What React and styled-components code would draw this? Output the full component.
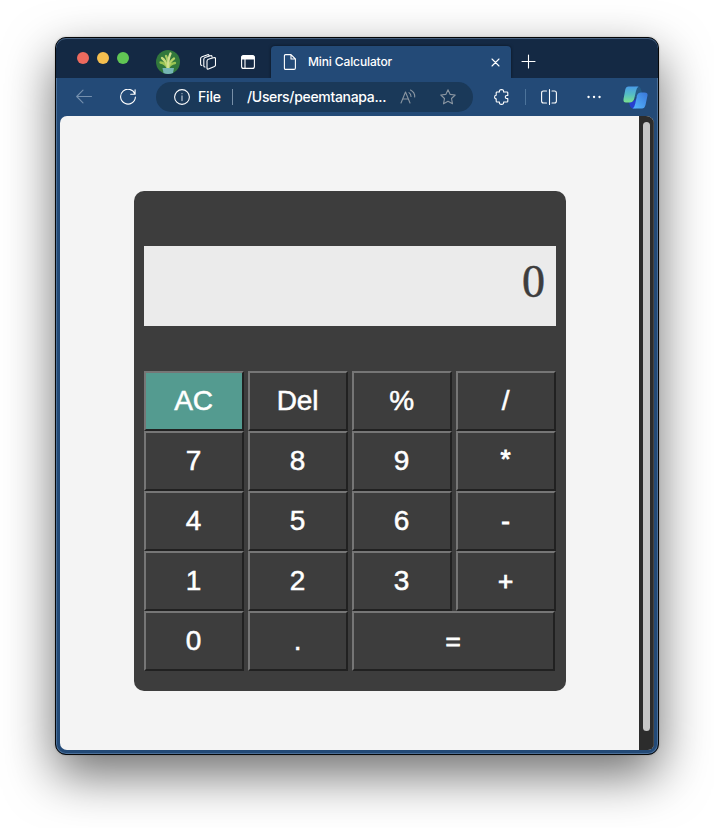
import React from "react";
import styled, { createGlobalStyle } from "styled-components";

const GlobalStyle = createGlobalStyle`
  * { box-sizing: border-box; }
  body { margin: 0; background: #fff; overflow: hidden; }
`;

const Desktop = styled.main`
  height: 828px;
  width: 714px;
  padding: 37px 55px 73px;
  overflow: hidden;
`;

const BrowserWindow = styled.section`
  width: 604px;
  height: 718px;
  border: 1px solid #050607;
  border-radius: 11px;
  background: #234a77;
  overflow: hidden;
  display: flex;
  flex-direction: column;
  box-shadow: inset 0 0 0 1px #4b6f98, 0 20px 50px rgba(0, 0, 0, 0.57), 0 0 2px rgba(0, 0, 0, 0.25);
  font-family: Inter, sans-serif;
  color: #fff;
`;

const TabStrip = styled.header`
  height: 40px;
  flex: none;
  display: flex;
  align-items: flex-end;
  background: #142944;
  box-shadow: inset 0 1px #46607f;
  border-radius: 10px 10px 0 0;
`;

const StripTools = styled.div`
  width: 215px;
  height: 40px;
  padding: 7px 0 0 21px;
  display: flex;
`;

const Lights = styled.div`
  display: flex;
  gap: 8px;
  padding-top: 7px;
  width: 79px;
`;

const Light = styled.span`
  width: 12px;
  height: 12px;
  border-radius: 50%;
  background: ${(p) => p.$color};
`;

const Glyph = styled.svg`
  display: block;
  flex: none;
  width: ${(p) => p.$w || 16}px;
  height: ${(p) => p.$h || 16}px;
  margin: ${(p) => p.$margin || "0"};
  fill: none;
  stroke: ${(p) => p.$color || "#fff"};
  stroke-width: ${(p) => p.$stroke || 1.1};
  stroke-linecap: round;
  stroke-linejoin: round;
`;

const Tab = styled.div`
  width: 240px;
  height: 32px;
  display: flex;
  align-items: center;
  background: #234a77;
  border-radius: 4px 4px 0 0;
  box-shadow: 0 0 3px rgba(0, 0, 0, 0.55);
  padding-left: 12px;
`;

const TabTitle = styled.span`
  width: 194px;
  padding-left: 11px;
  font: 500 12px/16px Inter, sans-serif;
  letter-spacing: -0.12px;
  white-space: nowrap;
`;

const Toolbar = styled.nav`
  height: 38px;
  flex: none;
  display: flex;
  align-items: center;
  padding-left: 20px;
  background: #234a77;
  margin: 0 1px;
`;

const AddressBar = styled.div`
  width: 317px;
  height: 30px;
  flex: none;
  margin: 0 21px 0 20px;
  border-radius: 15px;
  background: #1a3959;
  display: flex;
  align-items: center;
  padding-left: 18px;
  font: 500 14px/18px Inter, sans-serif;
  white-space: nowrap;
`;

const Scheme = styled.span`
  width: 34px;
  margin-left: 8px;
  letter-spacing: -0.2px;
`;

const Url = styled.span`
  width: 154px;
  margin-left: 14px;
  letter-spacing: -0.32px;
`;

const Divider = styled.i`
  width: 1px;
  height: 16px;
  flex: none;
  background: ${(p) => p.$color || "#7890a8"};
  margin: ${(p) => p.$margin || "0"};
`;

const Viewport = styled.div`
  height: 634px;
  margin: 0 4px;
  display: flex;
  border-radius: 7px 8px 6px 7px;
  overflow: hidden;
  background: #f4f4f4;
`;

const Page = styled.div`
  width: 579px;
  padding: 75px 73px 0 74px;
`;

const Scrollbar = styled.div`
  width: 15px;
  background: #2c2c2c;
  border-right: 1px solid #454545;
  padding: 6px 3px 0 4px;
`;

const Thumb = styled.div`
  width: 7px;
  height: 609px;
  border-radius: 4px;
  background: #c6c6c6;
`;

const Calculator = styled.section`
  width: 432px;
  height: 500px;
  padding: 55px 10px 20px;
  border-radius: 10px;
  background: #3d3d3d;
`;

const Display = styled.output`
  display: block;
  height: 80px;
  margin-bottom: 45px;
  padding: 10px 11px 0;
  background: #ebebeb;
  color: #3d3d3d;
  font: 46px/52px "Liberation Serif", serif;
  -webkit-text-stroke: 0.5px #3d3d3d;
  text-align: right;
`;

const Keypad = styled.div`
  display: grid;
  grid-template-columns: repeat(4, 100px);
  grid-auto-rows: 60px;
  column-gap: 4px;
`;

const Key = styled.button`
  grid-column: span ${(p) => (p.$wide ? 2 : 1)};
  width: ${(p) => (p.$wide ? 203 : 100)}px;
  padding: 0 1px 0 0;
  border: 2px solid;
  border-color: #767676 #212121 #212121 #767676;
  background: ${(p) => (p.$accent ? "#549b90" : "#3d3d3d")};
  color: #fff;
  font: 28px/32px "Liberation Sans", sans-serif;
  letter-spacing: -0.2px;
  -webkit-text-stroke: 0.5px #fff;
`;

const OperatorKey = styled(Key)`
  padding-bottom: ${(p) => p.$raise || 0}px;
  font-size: 26px;
  -webkit-text-stroke: 0.9px #fff;
`;

const keys = ["AC", "Del", "%", "/", "7", "8", "9", "*", "4", "5", "6", "-", "1", "2", "3", "+", "0", ".", "="];
const operatorRaise = { "*": 5, "-": 1, "+": 1, "=": 1 };

function Avatar() {
  return (
    <Glyph $w={24} $h={24} $margin="5px 0 0" viewBox="0 0 24 24">
      <circle cx="12" cy="12" r="12" fill="#32783c" stroke="none" />
      <g strokeWidth="2.3">
        <path d="M12 18Q9 13 4.5 12.5" stroke="#9bc553" />
        <path d="M12 18Q14 14 19 13" stroke="#9bc553" />
        <path d="M12 18Q10 11 6 8" stroke="#c6da7b" />
        <path d="M12 18Q14 11 18 8.5" stroke="#b6d367" />
        <path d="M12 18Q12 9 10 6" stroke="#a6cc60" />
        <path d="M12 18Q12 9 14.5 3.5" stroke="#d0df91" />
      </g>
      <path d="M6.5 18H18L17 23Q12 25 7.5 23Z" fill="#75b5b5" stroke="none" />
    </Glyph>
  );
}

function Copilot() {
  return (
    <Glyph $w={25} $h={23} $margin="0 0 0 21px" viewBox="0 0 25 23">
      <defs>
        <linearGradient id="mint" x1="0" y1="0" x2="0" y2="1">
          <stop stopColor="#4a9ce8" />
          <stop offset=".5" stopColor="#55bdc4" />
          <stop offset="1" stopColor="#7be18d" />
        </linearGradient>
        <linearGradient id="sky" x1="0" y1="1" x2="1" y2="0">
          <stop stopColor="#56b8ff" />
          <stop offset="1" stopColor="#3976d8" />
        </linearGradient>
      </defs>
      <g stroke="none">
        <path d="M12 .5H15.5Q17.5 .5 19 6.5L15 11H11Z" fill="#245b86" />
        <path d="M6 16H9L15 12L13 22.5H10Q7 22.5 6 16Z" fill="#263fcf" />
        <path d="M5.5 .5H15.5Q13.7 1.5 13 5L11.3 12.5Q10.3 16.5 6.5 16.5H3Q0 16.5 .5 13L2.3 3.5Q3 .5 5.5 .5Z" fill="url(#mint)" />
        <path d="M18 6.5H21.5Q25 6.5 24.5 9.5L22.5 19Q21.5 22.5 19 22.5H9.5Q11.5 21.5 12.3 17.5L14 9.5Q15 6.5 18 6.5Z" fill="url(#sky)" />
      </g>
    </Glyph>
  );
}

export default function App() {
  return (
    <>
      <GlobalStyle />
      <Desktop>
        <BrowserWindow>
          <TabStrip>
            <StripTools>
              <Lights>
                <Light $color="#ed6a5e" />
                <Light $color="#f5bf4f" />
                <Light $color="#61c654" />
              </Lights>
              <Avatar />
              <Glyph $margin="9px 0 0 20px" viewBox="0 0 16 16">
                <path d="M9 5L14.5 3.5Q15.5 3.5 15.5 4.5V11Q15.5 12 14.5 12.5L8.5 15Q7 15.5 7 14V7Q7 5.5 9 5ZM12 3V2.5Q12 1.3 10.5 1.7L5 3.5Q3.8 4 3.8 5.3V12Q3.8 13 5 13M9 1.3Q8.5 .3 7 .9L2 2.8Q.6 3.4.6 4.8V10.3Q.6 11.3 1.8 11.4" />
              </Glyph>
              <Glyph $w={14} $h={14} $margin="10px 0 0 25px" viewBox="0 0 14 14">
                <rect x=".6" y=".6" width="12.8" height="12.8" rx="2" />
                <path d="M1 2Q1 1 2 1H12Q13 1 13 2V4H1Z" fill="#fff" />
                <path d="M4 4V13" />
              </Glyph>
            </StripTools>
            <Tab>
              <Glyph $w={14} viewBox="0 0 14 16">
                <path d="M2.6.6H8L12.4 5V14Q12.4 15.4 11 15.4H2.6Q1.4 15.4 1.4 14V2Q1.4.6 2.6.6ZM8 1V5H12" />
              </Glyph>
              <TabTitle>Mini Calculator</TabTitle>
              <Glyph $w={9} $h={9} viewBox="0 0 9 9">
                <path d="M1 1L8 8M8 1L1 8" />
              </Glyph>
            </Tab>
            <Glyph $w={15} $h={15} $margin="0 0 9px 10px" viewBox="0 0 15 15">
              <path d="M7.5 1V14M1 7.5H14" />
            </Glyph>
          </TabStrip>
          <Toolbar>
            <Glyph $color="#7590ae" $margin="0 0 0 -1px" viewBox="0 0 16 16">
              <path d="M15.5 7.5H.7M7 1.2L.7 7.5L7 13.8" />
            </Glyph>
            <Glyph $margin="0 0 0 28px" viewBox="0 0 16 16">
              <path d="M15 5.2A7.4 7.4 0 1 0 15.4 8M15.1.8V5.2H10.7" />
            </Glyph>
            <AddressBar>
              <Glyph viewBox="0 0 16 16">
                <circle cx="8" cy="8" r="7.4" />
                <path d="M8 7V11.5M8 4.6V4.7" stroke="#aebccb" strokeWidth="1.3" />
              </Glyph>
              <Scheme>File</Scheme>
              <Divider />
              <Url>/Users/peemtanapa...</Url>
              <Glyph $color="#8995a1" $margin="0 0 0 -1px" viewBox="0 0 16 16">
                <path d="M1 14L5.5 3L10 14M2.7 10H8.4M9 3.6Q11 5 11 7.5M10.5 1Q15 3.3 14.7 8" />
              </Glyph>
              <Glyph $color="#8995a1" $margin="0 0 0 24px" viewBox="0 0 16 16">
                <path d="M8 .8L10.2 5.4L15.2 6L11.5 9.5L12.5 14.8L8 12.2L3.5 14.8L4.5 9.5L.8 6L5.8 5.4Z" />
              </Glyph>
            </AddressBar>
            <Glyph $w={15} viewBox="0 0 15 16">
              <path d="M3 3H5.4Q5.1.6 7.5.6T9.6 3H13Q13.8 3 13.8 3.8V6.5Q11.3 6.2 11.3 8T13.8 9.5V12.2Q13.8 13 13 13H9.6Q9.9 15.4 7.5 15.4T5.4 13H3Q2.2 13 2.2 12.2V9.8Q.6 9.8.6 8T2.2 6.2V3.8Q2.2 3 3 3Z" />
            </Glyph>
            <Divider $color="#4c739a" $margin="0 0 0 16px" />
            <Glyph $margin="0 0 0 15px" viewBox="0 0 16 16">
              <path d="M5.5 2H2.5Q.6 2 .6 4V12Q.6 14 2.5 14H5.5M8.5 .6V15.4M11 2H13.5Q15.4 2 15.4 4V12Q15.4 14 13.5 14H11" />
            </Glyph>
            <Glyph $margin="0 0 0 29px" viewBox="0 0 16 16" $stroke={2.3}>
              <path d="M2.5 8H2.6M8 8H8.1M13.5 8H13.6" />
            </Glyph>
            <Copilot />
          </Toolbar>
          <Viewport>
            <Page>
              <Calculator>
                <Display>0</Display>
                <Keypad>
                  {keys.map((key) =>
                    key in operatorRaise ? (
                      <OperatorKey key={key} $wide={key === "="} $raise={operatorRaise[key]}>{key}</OperatorKey>
                    ) : (
                      <Key key={key} $accent={key === "AC"}>{key}</Key>
                    )
                  )}
                </Keypad>
              </Calculator>
            </Page>
            <Scrollbar><Thumb /></Scrollbar>
          </Viewport>
        </BrowserWindow>
      </Desktop>
    </>
  );
}
